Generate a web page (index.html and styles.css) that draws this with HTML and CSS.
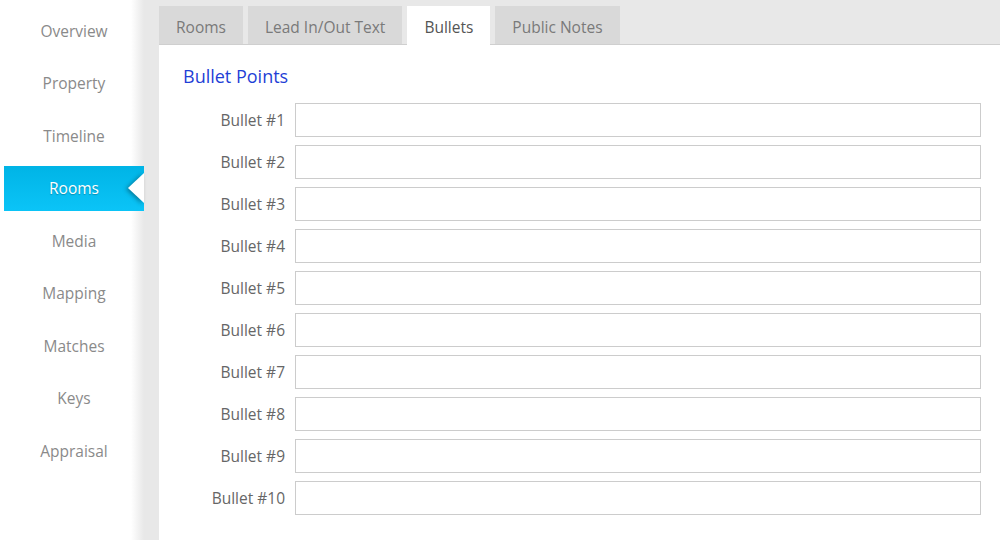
FILE: index.html
```html
<!DOCTYPE html>
<html lang="en">
<head>
  <meta charset="UTF-8" />
  <title>Bullets</title>
  <link rel="stylesheet" href="styles.css">
</head>
<body>
  <nav class="sidebar">
    <a class="nav-item" href="#">Overview</a>
    <a class="nav-item" href="#">Property</a>
    <a class="nav-item" href="#">Timeline</a>
    <a class="nav-item active" href="#">Rooms</a>
    <a class="nav-item" href="#">Media</a>
    <a class="nav-item" href="#">Mapping</a>
    <a class="nav-item" href="#">Matches</a>
    <a class="nav-item" href="#">Keys</a>
    <a class="nav-item" href="#">Appraisal</a>
  </nav>

  <main class="main">
    <div class="tabs">
      <div class="tab">Rooms</div>
      <div class="tab">Lead In/Out Text</div>
      <div class="tab selected">Bullets</div>
      <div class="tab">Public Notes</div>
    </div>

    <section class="panel">
      <h2>Bullet Points</h2>
      <div class="form">
        <label>Bullet #1</label><input type="text">
        <label>Bullet #2</label><input type="text">
        <label>Bullet #3</label><input type="text">
        <label>Bullet #4</label><input type="text">
        <label>Bullet #5</label><input type="text">
        <label>Bullet #6</label><input type="text">
        <label>Bullet #7</label><input type="text">
        <label>Bullet #8</label><input type="text">
        <label>Bullet #9</label><input type="text">
        <label>Bullet #10</label><input type="text">
      </div>
    </section>
  </main>
</body>
</html>
```

FILE: styles.css
```css
* {
  margin: 0;
  padding: 0;
  box-sizing: border-box;
}

body {
  font-family: "Open Sans", "Noto Sans", sans-serif;
  font-size: 15px;
  background: #e8e8e8;
  display: flex;
  height: 540px;
  overflow: hidden;
}

/* left menu */
.sidebar {
  width: 144px;
  flex-shrink: 0;
  padding: 8px 0 0 4px;
  background: linear-gradient(to right, #fff 131px, #e8e8e8 144px);
  display: flex;
  flex-direction: column;
}

.nav-item {
  position: relative;
  display: flex;
  align-items: center;
  justify-content: center;
  height: 45px;
  margin-bottom: 7.5px;
  color: #8a8a8a;
  font-size: 15.5px;
  text-decoration: none;
}

.nav-item.active {
  background: linear-gradient(#00b4e6, #0bc4f7);
  color: #fff;
  text-shadow: 0 1px 1px rgba(0, 0, 0, 0.25);
}

.nav-item.active::after {
  content: "";
  position: absolute;
  right: 0;
  top: 7px;
  border-style: solid;
  border-width: 15px 16px 15px 0;
  border-color: transparent #fff transparent transparent;
  filter: drop-shadow(-2px 1px 2px rgba(0, 0, 0, 0.35));
}

/* content */
.main {
  flex: 1;
  margin-left: 15px;
  display: flex;
  flex-direction: column;
}

.tabs {
  display: flex;
  gap: 5px;
  padding-top: 6px;
  border-bottom: 1px solid #cfcfcf;
}

.tab {
  height: 38px;
  padding: 3px 17px 0;
  display: flex;
  align-items: center;
  background: #d9d9d9;
  color: #7a7a7a;
  font-size: 15.5px;
}

.tab.selected {
  background: #fff;
  color: #555;
  margin-bottom: -1px;
  height: 39px;
  padding-bottom: 1px;
}

.panel {
  flex: 1;
  background: #fff;
  padding: 19px 19px 0 24px;
}

h2 {
  font-weight: normal;
  font-size: 18px;
  color: #1f3fd6;
  line-height: 24px;
  margin-bottom: 15px;
}

.form {
  display: grid;
  grid-template-columns: 102px 1fr;
  column-gap: 10px;
  row-gap: 8px;
}

.form label {
  text-align: right;
  color: #666;
  font-size: 15.5px;
  align-self: center;
}

.form input {
  height: 34px;
  border: 1px solid #cccccc;
  background: #fff;
  font: inherit;
  padding: 0 8px;
}
```
